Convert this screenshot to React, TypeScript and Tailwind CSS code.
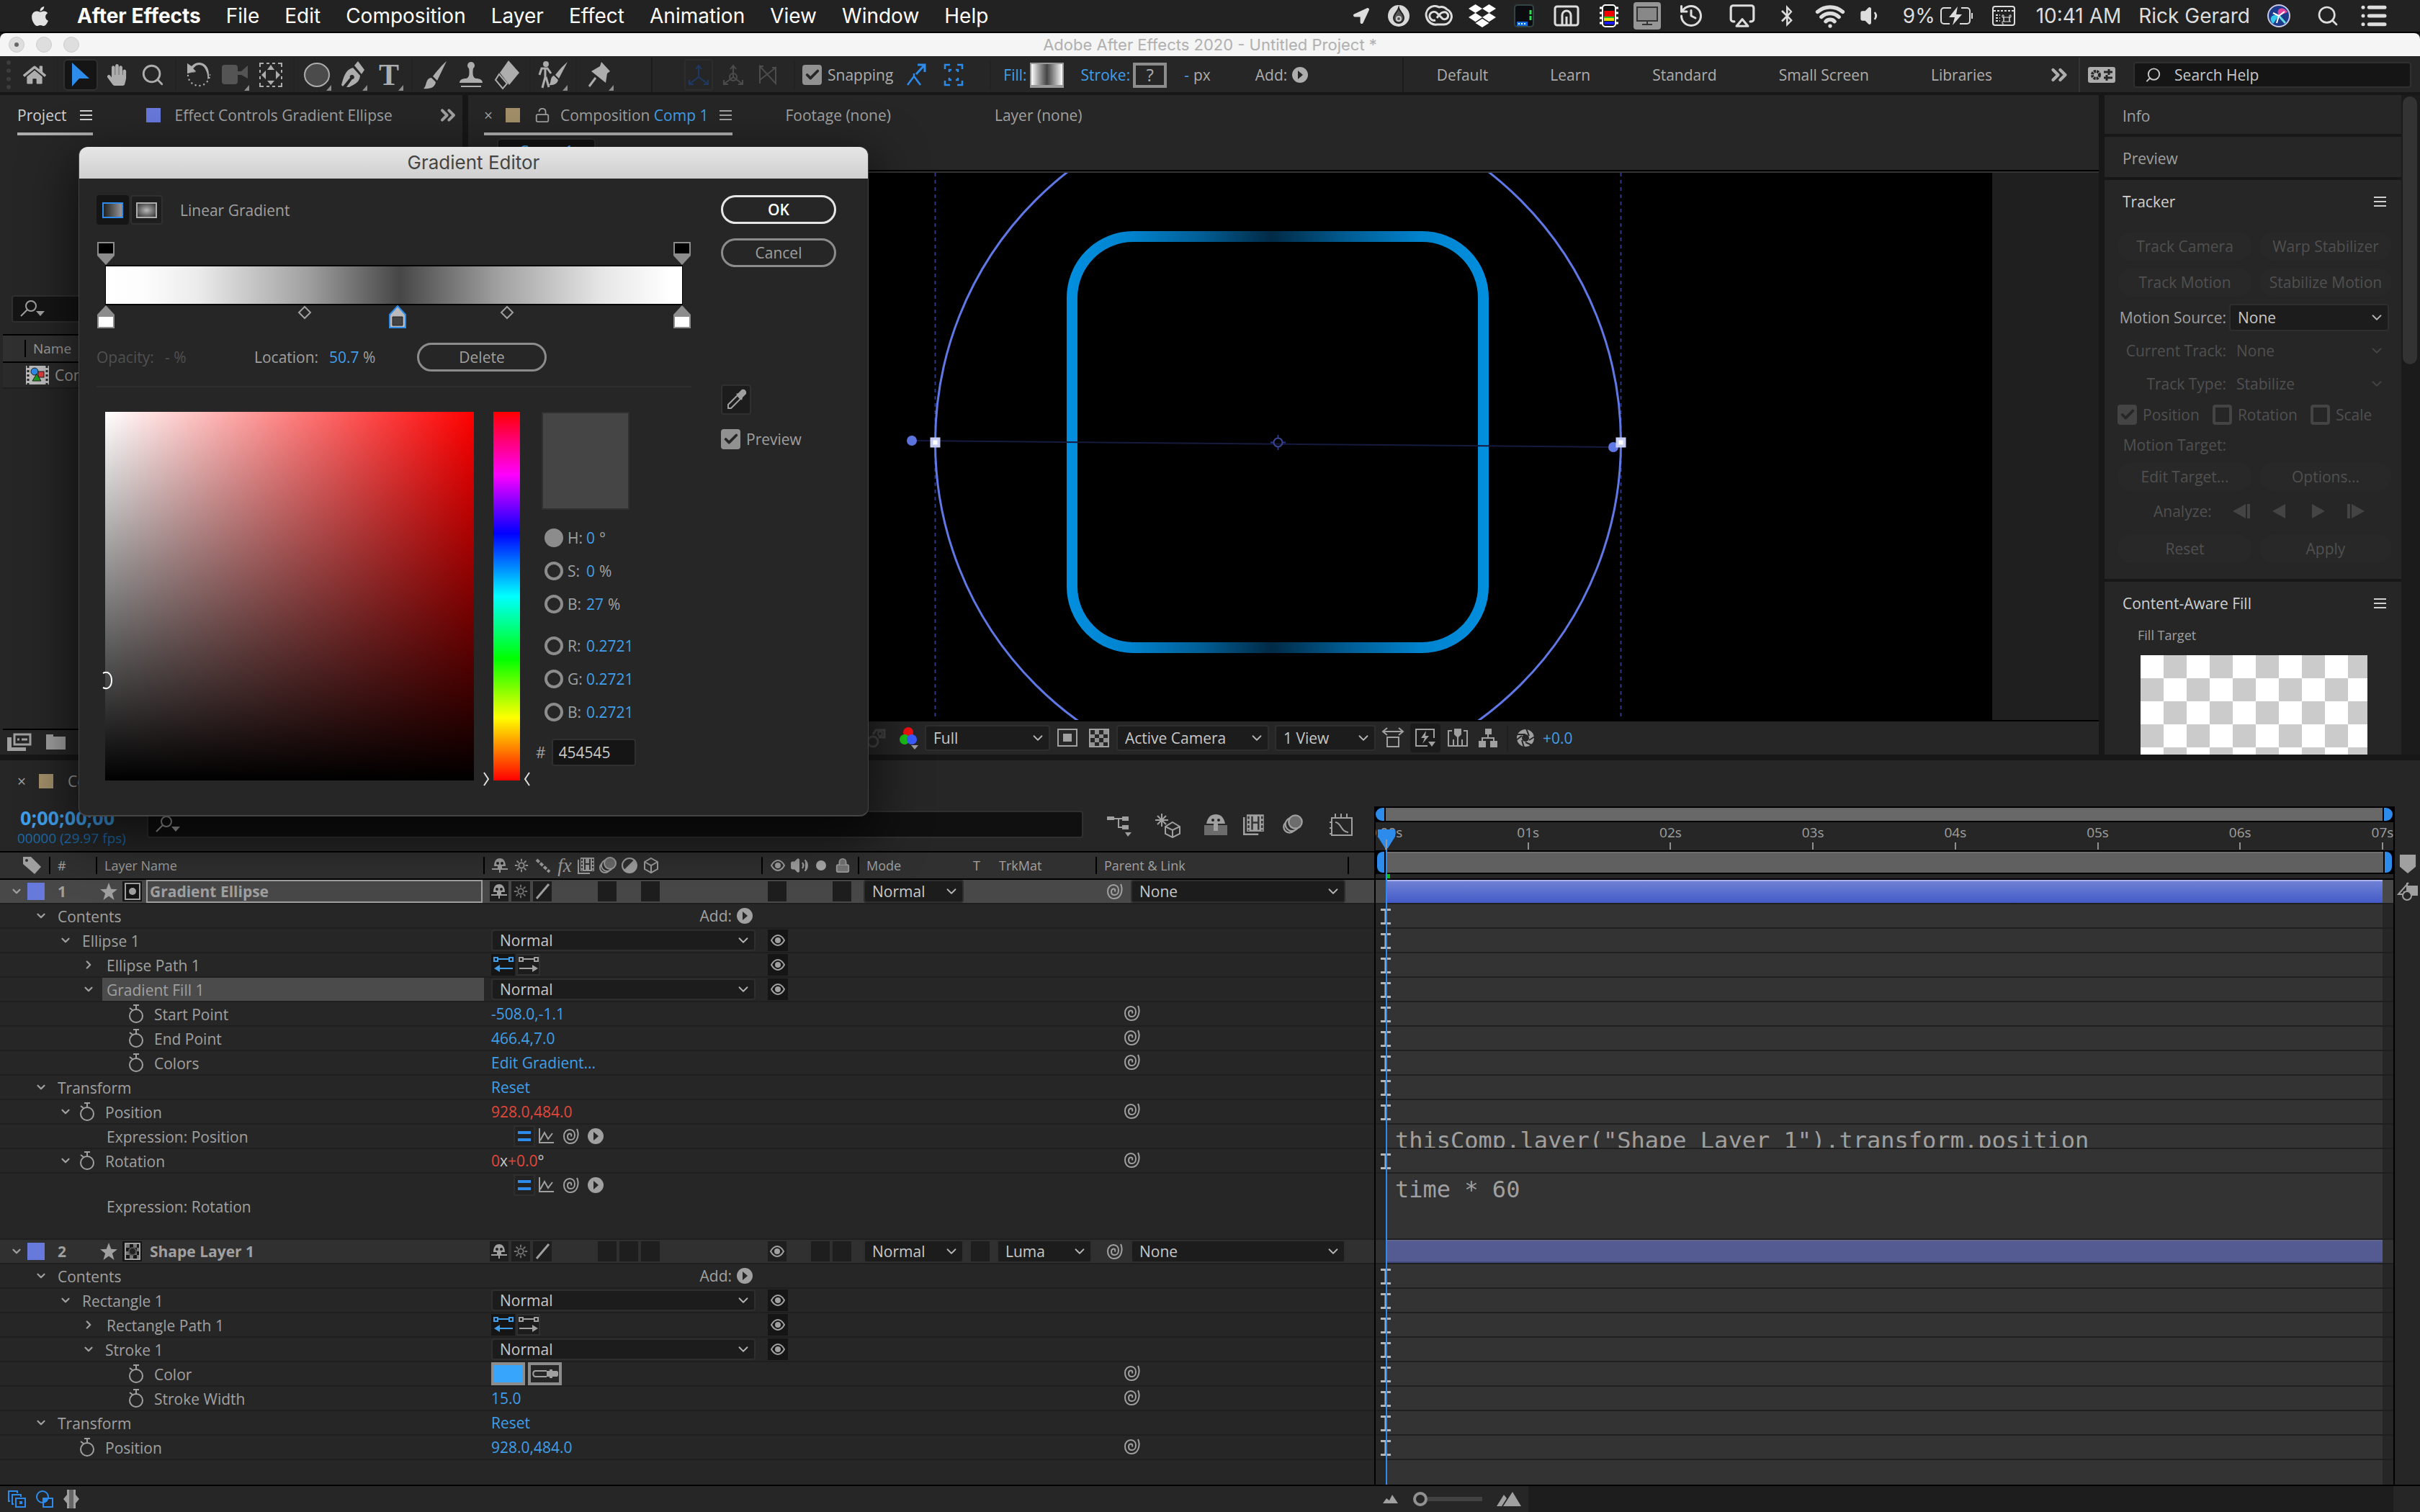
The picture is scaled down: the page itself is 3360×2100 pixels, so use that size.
import type { ReactNode } from 'react';
import clsx from 'clsx';
import { Airplay, Check, ChevronDown, ChevronRight, ChevronsRight, History, List, Lock, LockOpen, Search, Volume1, Volume2, Wifi } from 'lucide-react';
import { FaApple, FaBluetoothB, FaDropbox, FaHandPaper, FaHome, FaLocationArrow } from 'react-icons/fa';

/* ---------- icons ---------- */

type IconProps = { w?: number; h?: number; box?: string; className?: string; children: ReactNode };

function Icon({ w = 24, h = 24, box = '0 0 24 24', className, children }: IconProps) {
  return (
    <svg width={w} height={h} viewBox={box} className={clsx('shrink-0', className)} fill="none" stroke="currentColor" strokeWidth="2" aria-hidden="true">
      {children}
    </svg>
  );
}

const Pickwhip = () => (
  <Icon>
    <path d="M20 2C23 8 22 22 11 22 4 22 2 16 2 12 2 6 6 3 10 3c5 0 7 4 7 7.500 0 4-2.500 6.500-5.500 6.500S7 15 7 12.500 8.500 8.500 10.500 8.500s2 2 1.500 4" />
  </Icon>
);

const Eye = () => (
  <Icon w={22} h={18} box="0 0 22 18">
    <path d="M2 9C5 3.500 8 2 11 2s6 1.500 9 7c-3 5.500-6 7-9 7S5 14.500 2 9Z" />
    <circle cx="11" cy="9" r="4" fill="currentColor" stroke="none" />
  </Icon>
);

const Stopwatch = () => (
  <Icon w={22} h={28} box="0 0 22 28">
    <circle cx="11" cy="17" r="9" />
    <path d="M7 2h8M11 2v6M2 6l4 3" />
  </Icon>
);

const Shy = () => (
  <Icon w={24} h={22} box="0 0 24 22">
    <path d="M4 12C4 4 8 1 12 1s8 3 8 11h-5v3H9v-3Z" fill="currentColor" stroke="none" />
    <circle cx="9" cy="8" r="2" fill="#1f1f1f" stroke="none" />
    <circle cx="15" cy="8" r="2" fill="#1f1f1f" stroke="none" />
    <path d="M1 16h22M12 12v9" />
  </Icon>
);

const Sun = ({ className }: { className?: string }) => (
  <Icon w={22} h={22} className={className}>
    <circle cx="12" cy="12" r="4" />
    <path d="M12 2v4M12 18v4M2 12h4M18 12h4M5 5l3 3M16 16l3 3M19 5l-3 3M8 16l-3 3" />
  </Icon>
);

const Film = ({ size = 24 }: { size?: number }) => (
  <Icon w={size} h={size}>
    <path d="M1 4v19h16" />
    <path d="M4 1h19v19H4Z" fill="currentColor" stroke="none" />
    <path d="M10 3v15M17 3v15M10 10h7" stroke="#333" />
    <path d="M6 3v16M21 3v16" stroke="#333" strokeDasharray="3 2" />
  </Icon>
);

const MotionBlur = () => (
  <Icon w={26} h={24} box="0 0 26 24">
    <circle cx="9" cy="15" r="7" />
    <circle cx="12" cy="12" r="8" fill="#2c2c2c" />
    <circle cx="16" cy="9" r="8" fill="#6c6c6c" />
  </Icon>
);

const Cube = () => (
  <Icon>
    <path d="M12 2l9 5v10l-9 5-9-5V7ZM3 7l9 5 9-5M12 12v10" />
  </Icon>
);

const PlayCircle = () => (
  <Icon>
    <circle cx="12" cy="12" r="11" fill="currentColor" stroke="none" />
    <path d="M9 6v12l7-6Z" fill="#262626" stroke="none" />
  </Icon>
);

const Hamburger = () => (
  <Icon w={18} h={18} box="0 0 18 18">
    <path d="M0 3h17M0 9h17M0 15h17" />
  </Icon>
);

const SearchDrop = () => (
  <Icon w={36} h={24} box="0 0 36 24">
    <circle cx="15" cy="8" r="7" />
    <path d="M10 13L1 22" />
    <path d="M22 15h12l-6 7Z" fill="currentColor" stroke="none" />
  </Icon>
);

const Eyedropper = () => (
  <Icon w={30} h={30} box="0 0 30 30">
    <path d="M17 9L4 22v5h4L21 14Z" />
    <path d="M15 7l3-1 5-5c4-1 7 2 6 6l-5 5-1 4Z" fill="currentColor" stroke="none" />
  </Icon>
);

const Star = () => (
  <Icon w={26} h={26}>
    <path d="M12 1l3 8 8 .5-6.500 5L19 23l-7-5-7 5 2.500-8.500L1 9.500 9 9Z" fill="currentColor" stroke="none" />
  </Icon>
);

const Graph = () => (
  <Icon>
    <path d="M2 1v20h20M3 18l6-11 5 9 6-8" />
  </Icon>
);

const IBeam = () => (
  <Icon w={14} h={22} box="0 0 14 22" className="text-[#b5b5b5]">
    <path d="M0 1.500h14M0 20.500h14M7 1v20" strokeWidth="3" />
  </Icon>
);

/* ---------- shared controls ---------- */

type DropdownProps = { label: string; value: string; className: string; dim?: boolean };

function Dropdown({ label, value, className, dim }: DropdownProps) {
  return (
    <div className={clsx('relative shrink-0', className)}>
      <select
        aria-label={label}
        disabled={dim}
        className={clsx(
          'h-full w-full appearance-none pl-2.5 text-[21px] leading-none',
          dim ? 'rounded text-[#505050]' : 'rounded-sm border-2 border-[#2e2e2e] bg-[#1c1c1c] text-[#c8c8c8]'
        )}
      >
        <option>{value}</option>
      </select>
      <ChevronDown size={22} className={clsx('pointer-events-none absolute top-1/2 right-1.5 -translate-y-1/2', dim ? 'text-[#454545]' : 'text-[#b5b5b5]')} />
    </div>
  );
}

function CheckBox({ label, checked, dim, className }: { label: string; checked?: boolean; dim?: boolean; className?: string }) {
  return (
    <label className={clsx('flex items-center gap-2', dim && 'text-[#505050]', className)}>
      <span className="grid">
        <input
          type="checkbox"
          defaultChecked={checked}
          disabled={dim}
          className={clsx(
            'col-start-1 row-start-1 h-7 w-[27px] appearance-none rounded border-4',
            dim ? 'border-[#444]' : 'border-[#919191]',
            checked && (dim ? 'bg-[#444]' : 'bg-[#919191]')
          )}
        />
        {checked && <Check size={22} strokeWidth={4} className="pointer-events-none col-start-1 row-start-1 m-auto text-[#262626]" />}
      </span>
      {label}
    </label>
  );
}

/* ---------- mac menu bar ---------- */

const menus = ['File', 'Edit', 'Composition', 'Layer', 'Effect', 'Animation', 'View', 'Window', 'Help'];

function MenuBar() {
  return (
    <header className="flex h-[46px] items-center border-b-2 border-black bg-[#222] pr-[44px] pl-10 font-[Inter,sans-serif] text-[28px] text-white">
      <FaApple size={31} className="text-[#e2e2e2]" />
      <nav className="ml-9 flex gap-[35px]">
        <button className="font-bold">After Effects</button>
        {menus.map((m) => (
          <button key={m}>{m}</button>
        ))}
      </nav>
      <div className="ml-auto flex items-center text-[#ddd]">
        <span className="flex w-[52px] justify-center"><FaLocationArrow size={22} /></span>
        <span className="flex w-[52px] justify-center">
          <Icon w={32} h={32} box="0 0 32 32">
            <circle cx="16" cy="16" r="15" fill="#d8d8d8" stroke="none" />
            <path d="M16 5c1 5 7 8 7 14a7 7 0 0 1-14 0c0-5 5-8 7-14Z" fill="#555" stroke="#222" />
            <circle cx="16" cy="20" r="3" stroke="#ccc" />
          </Icon>
        </span>
        <span className="flex w-[60px] justify-center">
          <Icon w={40} h={30} box="0 0 40 30">
            <path d="M20 3a12 12 0 0 0-17 15c2 6 8 10 14 9h10a11 11 0 0 0 4-21c-3-3-7-4-11-3Z" strokeWidth="3" />
            <path d="M15 21a6 6 0 1 1 2-10l8 8a5 5 0 1 0 1-9c-4 0-6 4-9 8" strokeWidth="3" />
          </Icon>
        </span>
        <span className="flex w-[60px] justify-center"><FaDropbox size={38} className="text-white" /></span>
        <span className="flex w-[56px] justify-center">
          <Icon w={32} h={34} box="0 0 32 34">
            <rect x="3" y="2" width="26" height="30" rx="4" fill="#0c0c10" stroke="#344" />
            <path d="M25 9v16" stroke="#2fe04a" strokeWidth="3" strokeDasharray="6 2" />
            <path d="M6 25h15v6H6Z" fill="#1769e0" stroke="none" />
            <path d="M8 28h11" stroke="#cfe" strokeDasharray="2 2" />
          </Icon>
        </span>
        <span className="flex w-[62px] justify-center">
          <Icon w={36} h={30} box="0 0 36 30">
            <rect x="2" y="2" width="32" height="26" rx="3" strokeWidth="3" />
            <path d="M12 27V14a6 6 0 0 1 12 0v13M18 27V16" strokeWidth="3" />
          </Icon>
        </span>
        <span className="flex w-[56px] justify-center">
          <Icon w={28} h={34} box="0 0 28 34">
            <path d="M1 6h4M1 13h4M1 20h4M1 27h4M23 6h4M23 13h4M23 20h4M23 27h4" stroke="#fff" strokeWidth="3" />
            <rect x="5" y="2" width="18" height="30" rx="4" fill="#111" stroke="#fff" />
            <path d="M7 10h14v8H7Z" fill="#f00000" stroke="none" />
            <path d="M7 18h14v2H7Z" fill="#18c818" stroke="none" />
            <path d="M7 20h14v4H7Z" fill="#f0e000" stroke="none" />
            <path d="M7 25h14v4H7Z" fill="#1818f0" stroke="none" />
          </Icon>
        </span>
        <span className="mx-1.5 flex h-[38px] w-[38px] items-center justify-center rounded bg-[#969696]">
          <Icon w={32} h={28} box="0 0 32 28">
            <rect x="2" y="2" width="28" height="19" fill="#888" stroke="#333" />
            <path d="M16 21v4M9 26h14" stroke="#333" />
          </Icon>
        </span>
        <span className="flex w-[72px] justify-center"><History size={36} /></span>
        <span className="flex w-[70px] justify-center"><Airplay size={38} /></span>
        <span className="flex w-[54px] justify-center"><FaBluetoothB size={30} /></span>
        <span className="flex w-[66px] justify-center"><Wifi size={42} strokeWidth={3} /></span>
        <span className="mr-5 flex w-[48px] justify-center"><Volume1 size={32} fill="currentColor" /></span>
        <span>9%</span>
        <Icon w={48} h={28} box="0 0 48 28" className="ml-1.5">
          <path d="M16 3H6a4 4 0 0 0-4 4v14a4 4 0 0 0 4 4h8M30 3h8a4 4 0 0 1 4 4v14a4 4 0 0 1-4 4H28M45 10v8" />
          <path d="M25 1L13 16h8l-3 11 13-15h-8Z" fill="currentColor" stroke="none" />
        </Icon>
        <Icon w={34} h={30} box="0 0 34 30" className="ml-6">
          <rect x="2" y="2" width="30" height="26" rx="3" />
          <path d="M3 8h28M6 14h6M6 18h6M6 22h6" strokeDasharray="3 2" />
          <path d="M17 17h8v6h-8ZM17 17h-2v-3h2v9h-2v3h2M25 17h2v-3h-2v9h2" strokeWidth="1" />
        </Icon>
        <span className="ml-7">10:41 AM</span>
        <span className="ml-6">Rick Gerard</span>
        <Icon w={32} h={32} box="0 0 32 32" className="ml-6">
          <circle cx="16" cy="16" r="15" fill="#1c3a8c" stroke="#c8c8e0" />
          <path d="M16 16C10 4 24 2 28 11Z" fill="#e0449c" stroke="none" />
          <path d="M16 16C4 12 2 22 8 27Z" fill="#34c8e8" stroke="none" />
          <path d="M16 16l9 10" stroke="#64e0e0" strokeWidth="3" />
          <path d="M8 12l8 4 8-6M16 16l-3 10" stroke="#fff" />
        </Icon>
        <Search size={32} className="ml-9" />
        <List size={40} strokeWidth={3} className="ml-7" />
      </div>
    </header>
  );
}

/* ---------- tool bar ---------- */

const Sep = () => <span className="mx-[5px] h-11 w-0.5 bg-[#222]" />;

type ToolProps = { label: string; active?: boolean; flyout?: boolean; children: ReactNode };

function Tool({ label, active, flyout, children }: ToolProps) {
  return (
    <button aria-label={label} className={clsx('relative flex h-11 w-12 items-center justify-center rounded-md', active && 'border-2 border-[#303030] bg-[#151515] text-[#2d8ceb]')}>
      {children}
      {flyout && (
        <svg width="7" height="8" viewBox="0 0 7 8" className="absolute right-1 bottom-0" aria-hidden="true">
          <path d="M7 0v8H0Z" fill="#8c8c8c" />
        </svg>
      )}
    </button>
  );
}

function ToolBar() {
  return (
    <div className="flex h-[50px] items-center bg-[#262626] pt-0.5 pr-3 text-[#adadad]">
      <span className="ml-[9px] mr-[9px] h-10 border-l-[6px] border-dotted border-[#3c3c3c]" />
      <div className="flex items-center gap-0.5">
        <Tool label="Home"><FaHome size={32} /></Tool>
        <Sep />
        <Tool label="Selection" active>
          <Icon w={28} h={36} box="0 0 28 36"><path d="M2 1v33l10-11h14Z" fill="currentColor" stroke="none" /></Icon>
        </Tool>
        <Tool label="Hand"><FaHandPaper size={30} /></Tool>
        <Tool label="Zoom"><Search size={34} /></Tool>
        <Sep />
        <Tool label="Rotate">
          <Icon w={34} h={40} box="0 0 34 40">
            <path d="M7 9C14-1 32 1 31 21c0 2-1 4-2 6 2-12-3-21-12-21-3 0-6 2-8 6l4 4-12 2V4Z" fill="currentColor" stroke="none" />
            <circle cx="17" cy="20" r="15" strokeWidth="2.500" strokeLinecap="round" strokeDasharray="0 6" pathLength="94" strokeDashoffset="-10" />
            <path d="M3 18L2 1h30v20l-5-1c2-8-4-14-10-14-4 0-6 2-8 5l4 4Z" fill="#262626" stroke="none" />
            <path d="M7 8C14-1 32 1 31 21c0 2 0 4-1 5-1-9-4-20-13-20-3 0-6 2-8 5l4 4-12 3V4Z" fill="currentColor" stroke="none" />
          </Icon>
        </Tool>
        <Tool label="Camera" flyout>
          <Icon w={38} h={30} box="0 0 38 30" className="text-[#545454]">
            <rect x="1" y="1" width="22" height="27" rx="4" fill="currentColor" stroke="none" />
            <path d="M23 10h5l9-8v18l-9-5h-5Z" fill="currentColor" stroke="none" />
          </Icon>
        </Tool>
        <Tool label="Pan behind">
          <Icon w={34} h={36} box="0 0 34 36">
            <path d="M2 7V2h5M27 2h5v5M32 29v5h-5M7 34H2v-5M11 2h4M19 2h4M11 34h4M19 34h4M2 11v4M2 20v4M32 11v4M32 20v4" />
            <path d="M17 4l5 7H12ZM17 32l5-6H12ZM4 18l6-6v12ZM30 18l-6-6v12Z" fill="currentColor" stroke="none" />
          </Icon>
        </Tool>
        <Sep />
        <Tool label="Ellipse" flyout>
          <Icon w={38} h={36} box="0 0 38 36"><ellipse cx="19" cy="18" rx="17" ry="16" fill="#4b4b4b" /></Icon>
        </Tool>
        <Tool label="Pen" flyout>
          <Icon w={34} h={40} box="0 0 34 40">
            <path d="M17 10l10 11c-1 10-8 12-15 16H8l8-11a3 3 0 1 0-3-2L3 36l-2-2C4 24 6 13 17 10Z" fill="currentColor" stroke="none" />
            <path d="M19 7l5-6 9 12-4 6Z" fill="currentColor" stroke="none" />
          </Icon>
        </Tool>
        <Tool label="Type" flyout><span className="font-['Liberation_Serif',serif] text-[42px] leading-none font-bold">T</span></Tool>
        <Sep />
        <Tool label="Brush">
          <Icon w={34} h={40} box="0 0 34 40">
            <path d="M33 1L20 28l-6-6C20 14 27 6 33 1Z" fill="currentColor" stroke="none" />
            <path d="M12 24l6 6c-1 7-7 10-17 9 5-3 2-14 11-15Z" fill="currentColor" stroke="none" />
          </Icon>
        </Tool>
        <Tool label="Clone stamp">
          <Icon w={34} h={38} box="0 0 34 38">
            <circle cx="17" cy="6" r="5" fill="currentColor" stroke="none" />
            <path d="M14 9h6c-1 8-1 14 4 15 5 0 9 2 9 6H1c0-4 4-6 9-6 5-1 5-7 4-15Z" fill="currentColor" stroke="none" />
            <path d="M3 35h28" />
          </Icon>
        </Tool>
        <Tool label="Eraser">
          <Icon w={36} h={42} box="0 0 36 42">
            <path d="M20 1l15 17-14 17L8 18Z" fill="currentColor" stroke="none" />
            <path d="M7 20l11 13-6 7L2 28Z" />
          </Icon>
        </Tool>
        <Sep />
        <Tool label="Roto brush" flyout>
          <Icon w={42} h={38} box="0 0 42 38">
            <circle cx="11" cy="4" r="4" fill="currentColor" stroke="none" />
            <path d="M2 19l3-9h8l5 7M10 10v12l-4 15M11 22l4 14" strokeWidth="3" />
            <path d="M41 1L29 24l-5-5C30 11 36 5 41 1ZM22 20l6 6c-1 5-6 8-13 7 4-3 1-11 7-13Z" fill="currentColor" stroke="none" />
          </Icon>
        </Tool>
        <Sep />
        <Tool label="Puppet pin" flyout>
          <Icon w={32} h={38} box="0 0 32 38">
            <path d="M19 1l12 13-4 3-2 13L5 14l12-7Z" fill="currentColor" stroke="none" />
            <path d="M11 23L2 35" strokeWidth="3" />
          </Icon>
        </Tool>
      </div>
      <span className="ml-12 h-full w-0.5 bg-[#1c1c1c]" />
      <div className="ml-11 flex items-center gap-3">
        <span className="flex h-11 w-10 items-center justify-center rounded border-2 border-[#2d2d2d] text-[#1e3a63]">
          <Icon w={30} h={30} box="0 0 30 30"><path d="M15 3v15L3 27M15 18l12 9M11 7l4-5 4 5M2 22v6h6M28 22v6h-6" /></Icon>
        </span>
        <Icon w={32} h={30} box="0 0 30 30" className="text-[#4c4c4c]"><circle cx="15" cy="18" r="5" /><path d="M15 3v15L3 27M15 18l12 9M11 7l4-5 4 5M2 22v6h6M28 22v6h-6" /></Icon>
        <Icon w={32} h={30} box="0 0 30 30" className="ml-1 text-[#4c4c4c]"><path d="M4 27V3l22 24V5L4 22M4 8V3h5M26 10V5h-5" /></Icon>
      </div>
      <span className="ml-5 h-11 w-0.5 bg-[#222]" />
      <CheckBox label="Snapping" checked className="ml-2.5" />
      <Icon w={28} h={32} box="0 0 28 32" className="ml-[18px] text-[#2d8ceb]">
        <path d="M2 30l9-12 9 12M11 18v-4" strokeWidth="2.500" />
        <path d="M16 2h10v10M26 2L14 15" strokeWidth="3" strokeDasharray="30 0" />
      </Icon>
      <Icon w={28} h={32} box="0 0 28 32" className="ml-6 text-[#2d8ceb]">
        <path d="M2 8V2h7M19 2h7v6M26 24v6h-7M9 30H2v-6M8 12V9h3M17 9h3v3M20 20v3h-3M11 23H8v-3" strokeWidth="2.500" />
      </Icon>
      <span className="mr-[17px] ml-9 h-11 w-0.5 bg-[#222]" />
      <button className="text-[#409fea]">Fill:</button>
      <span className="ml-1 h-[35px] w-[47px] border-2 border-b-4 border-[#999] bg-linear-to-r from-white via-[#454545] to-white" />
      <button className="ml-6 text-[#409fea]">Stroke:</button>
      <span className="ml-1 flex h-[35px] w-[47px] items-center justify-center border-4 border-[#8c8c8c] text-[24px]">?</span>
      <span className="ml-6 text-[#409fea]">-</span>
      <span className="ml-1.5">px</span>
      <span className="ml-[62px] mr-1.5">Add:</span>
      <PlayCircle />
      <div className="ml-auto flex h-full items-center">
        <span className="h-full w-0.5 bg-[#1c1c1c]" />
        <nav className="ml-[46px] flex gap-[86px]">
          {['Default', 'Learn', 'Standard', 'Small Screen', 'Libraries'].map((w) => (
            <button key={w}>{w}</button>
          ))}
        </nav>
        <ChevronsRight size={34} strokeWidth={3} className="ml-[76px]" />
        <span className="ml-[10px] h-full w-0.5 bg-[#333]" />
        <Icon w={40} h={26} box="0 0 40 26" className="ml-2.5">
          <rect x="1" y="2" width="38" height="22" rx="3" fill="currentColor" stroke="none" />
          <circle cx="12" cy="13" r="5" stroke="#262626" strokeWidth="4" strokeDasharray="3 1" />
          <path d="M23 9h12M23 17h12M30 5v8M27 13v8" stroke="#262626" strokeWidth="3" />
        </Icon>
        <label className="ml-6 flex h-9 w-[386px] items-center gap-[18px] rounded border-2 border-[#303030] bg-[#151515] pl-3.5 text-[#c8c8c8]">
          <Search size={26} className="-scale-x-100" />
          <input aria-label="Search Help" defaultValue="Search Help" className="w-full bg-transparent outline-none" />
        </label>
      </div>
    </div>
  );
}

/* ---------- upper panels ---------- */

function ProjectPanel() {
  return (
    <section className="flex w-[642px] shrink-0 flex-col bg-[#262626] pl-1">
      <div className="flex h-[56px] shrink-0 items-center">
        <span className="ml-5 flex h-[52px] items-center gap-[18px] self-end border-b-4 border-[#adadad] text-[#d0d0d0]">
          Project <Hamburger />
        </span>
        <span className="ml-[74px] h-5 w-5 bg-[#6879dc]" />
        <span className="ml-5">Effect Controls Gradient Ellipse</span>
        <ChevronsRight size={32} strokeWidth={3} className="mr-1 ml-auto" />
      </div>
      <div className="mt-[222px] ml-3 flex h-[38px] items-center rounded border-2 border-[#303030] bg-[#151515] pl-2.5">
        <SearchDrop />
      </div>
      <div className="mt-4 flex h-10 items-center border-y-2 border-black bg-[#303030] text-[19px]">
        <span className="mr-2.5 ml-[30px] h-6 w-0.5 bg-black" />Name
      </div>
      <div className="flex h-9 items-center gap-2 border-b-2 border-[#1f1f1f] bg-[#2a2a2a] pl-8">
        <Icon w={32} h={26} box="0 0 32 26">
          <rect width="32" height="26" fill="#bdbdbd" stroke="none" />
          <path d="M3 0v26M29 0v26" stroke="#262626" strokeDasharray="3 3" strokeWidth="3" />
          <circle cx="12" cy="8" r="5" fill="#2d8ceb" stroke="#222" strokeWidth="1" />
          <rect x="17" y="8" width="8" height="8" fill="#e03c3c" stroke="#222" strokeWidth="1" />
          <path d="M15 11l6 10H9Z" fill="#1f9c1f" stroke="#222" strokeWidth="1" />
        </Icon>
        Comp 1
      </div>
      <div className="mt-auto flex h-9 items-center gap-5 border-t-2 border-black pl-1.5">
        <Icon w={34} h={26} box="0 0 34 26">
          <rect x="10" y="2" width="22" height="14" strokeWidth="3" />
          <path d="M14 9h3M20 9h8" strokeWidth="3" />
          <path d="M0 6h6v14h20v5H0Z" fill="currentColor" stroke="none" />
        </Icon>
        <Icon w={28} h={22} box="0 0 28 22"><path d="M0 0h10v3h17v18H0Z" fill="currentColor" stroke="none" /></Icon>
      </div>
    </section>
  );
}

function Viewer() {
  return (
    <svg viewBox="650 240 2116 760" className="h-[760px] min-w-0 flex-1 bg-black" role="img" aria-label="Comp 1">
      <defs>
        <linearGradient id="stroke" gradientUnits="userSpaceOnUse" x1="1481" y1="0" x2="2067" y2="0">
          <stop offset="0" stopColor="#018fdf" />
          <stop offset=".15" stopColor="#0083ce" />
          <stop offset=".32" stopColor="#005d94" />
          <stop offset=".485" stopColor="#002a45" />
          <stop offset=".66" stopColor="#005b91" />
          <stop offset=".84" stopColor="#0083ce" />
          <stop offset="1" stopColor="#018fdf" />
        </linearGradient>
      </defs>
      <path d="M1298.500 240v760M2250.500 240v760" stroke="#2c3982" strokeDasharray="5 5" strokeWidth="2" />
      <rect x="1488.500" y="328.500" width="571" height="571" rx="85" fill="none" stroke="url(#stroke)" strokeWidth="15" />
      <path d="M1266 612L2240 621" stroke="#151a3f" strokeWidth="2" />
      <circle cx="1774.500" cy="614.500" r="476" fill="none" stroke="#6078e6" strokeWidth="3" />
      <circle cx="1774.500" cy="614.500" r="6" fill="none" stroke="#3a4796" strokeWidth="2" />
      <path d="M1774.500 604v4M1774.500 621v4M1764 614.500h4M1781 614.500h4" stroke="#2c3982" strokeWidth="2" />
      <circle cx="1266" cy="612" r="7" fill="#6078e6" />
      <circle cx="2240" cy="621" r="7" fill="#6078e6" />
      <rect x="1293.500" y="609.500" width="10" height="10" fill="#fff" stroke="#c9cff5" strokeWidth="4" />
      <rect x="2245.500" y="609.500" width="10" height="10" fill="#fff" stroke="#c9cff5" strokeWidth="4" />
    </svg>
  );
}

function CompositionPanel() {
  return (
    <section className="flex min-w-0 flex-1 flex-col bg-[#262626]">
      <div className="flex h-[56px] items-center">
        <div className="ml-[22px] flex h-[52px] items-center self-end border-b-4 border-[#adadad]">
          <span className="w-[30px]">×</span>
          <span className="h-5 w-5 bg-[#a3906a]" />
          <LockOpen size={22} className="mr-3.5 ml-5 -scale-x-100" />
          Composition&nbsp;<span className="text-[#409fea]">Comp 1</span>
          <span className="ml-4"><Hamburger /></span>
        </div>
        <span className="ml-[73px]">Footage (none)</span>
        <span className="ml-[144px]">Layer (none)</span>
      </div>
      <div className="flex h-[50px] border-b-2 border-black pl-10">
        <button className="mt-1 h-9 w-[137px] rounded-md border-2 border-[#2e2e2e] bg-[#131313] text-[#409fea]">Comp 1</button>
      </div>
      <div className="flex border-t-2 border-[#333]">
        <Viewer />
        <div className="w-[148px] bg-[#1f1f1f]" />
      </div>
      <div className="flex h-[48px] items-center border-t-2 border-black pl-[548px]">
        <Icon w={32} h={30} box="0 0 32 30" className="text-[#444]">
          <circle cx="14" cy="20" r="7" strokeWidth="3" />
          <path d="M14 10l4-6h12v10h-8" strokeWidth="3" />
          <circle cx="24" cy="9" r="3" />
        </Icon>
        <Icon w={30} h={34} box="0 0 30 34" className="ml-[18px]">
          <circle cx="13" cy="9" r="7" fill="#f01010" stroke="none" />
          <circle cx="8" cy="19" r="7" fill="#18c018" stroke="none" />
          <circle cx="18" cy="19" r="7" fill="#3a5cff" stroke="none" />
          <path d="M17 27h10l-5 6Z" fill="currentColor" stroke="none" />
        </Icon>
        <Dropdown label="Resolution" value="Full" className="ml-1.5 h-9 w-[174px]" />
        <Icon w={28} h={26} box="0 0 28 26" className="ml-2.5"><rect x="1" y="1" width="26" height="23" /><rect x="8" y="7" width="12" height="11" fill="currentColor" stroke="none" /></Icon>
        <Icon w={28} h={26} box="0 0 28 26" className="mr-2.5 ml-4">
          <rect x="1" y="1" width="26" height="24" fill="#262626" />
          <path d="M8 2h6v6H8ZM20 2h6v6h-6ZM2 8h6v5H2ZM14 8h6v5h-6ZM8 13h6v6H8ZM20 13h6v6h-6ZM2 19h6v5H2ZM14 19h6v5h-6Z" fill="#909090" stroke="none" />
        </Icon>
        <Dropdown label="3D view" value="Active Camera" className="h-9 w-[212px]" />
        <Dropdown label="View layout" value="1 View" className="ml-2 h-9 w-[140px]" />
        <Icon w={32} h={30} box="0 0 32 30" className="ml-2"><path d="M2 6h28M8 1L2 6l6 5M24 1l6 5-6 5" /><rect x="8" y="14" width="16" height="13" /></Icon>
        <span className="ml-2 flex h-10 w-[42px] items-center justify-center rounded bg-[#1b1b1b]">
          <Icon w={30} h={28} box="0 0 30 28"><path d="M27 14V2H2v23h16" /><path d="M16 4L9 14h5l-3 8 9-11h-5ZM19 19h10l-5 7Z" fill="currentColor" stroke="none" /></Icon>
        </span>
        <Icon w={28} h={26} box="0 0 28 26" className="ml-2.5"><path d="M6 3H1v21h26V3h-5M8 24v-9M20 24v-9M14 24V12" /><path d="M9 0h10v8l-5 5-5-5Z" fill="currentColor" stroke="none" /></Icon>
        <Icon w={28} h={28} box="0 0 28 28" className="ml-3.5"><path d="M10 1h9v8h-9ZM1 18h10v9H1ZM17 18h10v9H17Z" fill="currentColor" stroke="none" /><path d="M14 9v5M6 18v-4h16v4" /></Icon>
        <span className="mr-2.5 ml-3 h-9 w-0.5 bg-[#202020]" />
        <Icon w={28} h={28} box="0 0 28 28">
          <circle cx="14" cy="14" r="12" fill="currentColor" stroke="none" />
          <path d="M14 9L3 9M19 11L15 1M19 17l8-5M14 20l9 4M9 17l3 10M9 11l-8 6" stroke="#262626" />
          <circle cx="14" cy="14" r="5" fill="#262626" stroke="none" />
        </Icon>
        <button className="ml-2.5 text-[#409fea]">+0.0</button>
      </div>
    </section>
  );
}

const GhostButton = ({ children }: { children: ReactNode }) => (
  <button disabled className="h-10 rounded-full bg-[#282828] text-[#505050]">{children}</button>
);

function RightPanel() {
  return (
    <aside className="flex w-[438px] shrink-0">
      <div className="flex flex-1 flex-col overflow-hidden">
        <h2 className="flex h-[54px] shrink-0 items-center bg-[#262626] pt-1 pl-[25px]">Info</h2>
        <h2 className="mt-1 flex h-[56px] shrink-0 items-center bg-[#262626] pt-1 pl-[25px]">Preview</h2>
        <div className="mt-1 h-[554px] shrink-0 bg-[#262626] pr-4 pl-[18px]">
          <h2 className="flex h-[60px] items-center justify-between pr-1 pl-[7px] text-[#d0d0d0]">Tracker <Hamburger /></h2>
          <div className="mt-3 grid grid-cols-[187px_184px] gap-x-2.5 gap-y-2.5">
            <GhostButton>Track Camera</GhostButton>
            <GhostButton>Warp Stabilizer</GhostButton>
            <GhostButton>Track Motion</GhostButton>
            <GhostButton>Stabilize Motion</GhostButton>
          </div>
          <div className="mt-2.5 grid grid-cols-[151px_222px] items-center gap-x-1 gap-y-2 text-right">
            <span>Motion Source:</span>
            <Dropdown label="Motion source" value="None" className="h-[38px]" />
            <span className="text-[#505050]">Current Track:</span>
            <Dropdown label="Current track" value="None" dim className="h-[38px]" />
            <span className="text-[#505050]">Track Type:</span>
            <Dropdown label="Track type" value="Stabilize" dim className="h-[38px]" />
          </div>
          <div className="mt-2.5 flex gap-[18px]">
            <CheckBox label="Position" checked dim />
            <CheckBox label="Rotation" dim />
            <CheckBox label="Scale" dim />
          </div>
          <p className="mt-3.5 w-[151px] text-right text-[#505050]">Motion Target:</p>
          <div className="mt-2.5 grid grid-cols-[187px_184px] gap-2.5">
            <GhostButton>Edit Target...</GhostButton>
            <GhostButton>Options...</GhostButton>
          </div>
          <div className="mt-3 flex h-8 items-center gap-[29px] pl-[50px] text-[#505050]">
            Analyze:
            <Icon className="text-[#444]"><path d="M18 2v20L0 12ZM20 2h4v20h-4Z" fill="currentColor" stroke="none" /></Icon>
            <Icon className="text-[#444]"><path d="M20 2v20L2 12Z" fill="currentColor" stroke="none" /></Icon>
            <Icon className="text-[#444]"><path d="M4 2v20l18-10Z" fill="currentColor" stroke="none" /></Icon>
            <Icon className="text-[#444]"><path d="M6 2v20l18-10ZM0 2h4v20H0Z" fill="currentColor" stroke="none" /></Icon>
          </div>
          <div className="mt-4 grid grid-cols-[187px_184px] gap-2.5">
            <GhostButton>Reset</GhostButton>
            <GhostButton>Apply</GhostButton>
          </div>
        </div>
        <div className="mt-1 min-h-0 flex-1 bg-[#262626] pr-4 pl-[25px]">
          <h2 className="flex h-[60px] items-center justify-between pr-1 text-[#d0d0d0]">Content-Aware Fill <Hamburger /></h2>
          <p className="pl-[21px] text-[18px] leading-7">Fill Target</p>
          <div className="mt-3.5 ml-[25px] h-[160px] w-[315px] bg-[repeating-conic-gradient(#cbcbcb_0_25%,#fff_0_50%)] bg-size-[64px_64px]" />
        </div>
      </div>
      <div className="w-[26px] bg-[#1b1b1b] pt-0.5 pl-0.5">
        <div className="h-[372px] w-5 rounded-full bg-[#333]" />
      </div>
    </aside>
  );
}

/* ---------- timeline ---------- */

const blue = 'text-[#409fea]';
const red = 'text-[#e0483c]';

type PropRow = {
  label: string;
  pad: string;
  chevron?: 'down' | 'right';
  watch?: boolean;
  selected?: boolean;
  tall?: boolean;
  value?: ReactNode;
  eye?: boolean;
  whip?: boolean;
  expression?: string;
};

const PathDirection = () => (
  <div className="flex gap-0.5">
    <button aria-label="Reverse path" className={clsx('flex h-[30px] w-[33px] items-center justify-center bg-[#151515]', blue)}>
      <Icon w={28} h={22} box="0 0 28 22"><path d="M1 1h5v5H1ZM22 1h5v5h-5ZM6 3h16M8 16h19" /><path d="M9 11v10l-8-5Z" fill="currentColor" stroke="none" /></Icon>
    </button>
    <button aria-label="Forward path" className="flex h-[30px] w-[33px] items-center justify-center border-2 border-[#303030] bg-[#1c1c1c]">
      <Icon w={28} h={22} box="0 0 28 22"><path d="M1 1h5v5H1ZM22 1h5v5h-5ZM6 3h16M1 16h19" /><path d="M19 11v10l8-5Z" fill="currentColor" stroke="none" /></Icon>
    </button>
  </div>
);

const Add = () => (
  <div className="flex flex-1 items-center justify-end gap-1.5 pr-5">Add: <PlayCircle /></div>
);

const ExpressionTools = () => (
  <div className="flex items-center gap-1 pl-[31px]">
    <span className="flex h-[30px] w-[30px] items-center justify-center border-2 border-[#2e2e2e] bg-[#222] text-[#2d8ceb]">
      <Icon w={18} h={14} box="0 0 18 14"><path d="M0 2h18M0 12h18" strokeWidth="4" /></Icon>
    </span>
    <div className="flex items-center gap-2.5">
      <Graph />
      <Pickwhip />
      <PlayCircle />
    </div>
  </div>
);

const Blend = () => <Dropdown label="Blend mode" value="Normal" className="h-[30px] w-[367px]" />;

const rows1: PropRow[] = [
  { label: 'Contents', pad: 'pl-12', chevron: 'down', value: <Add /> },
  { label: 'Ellipse 1', pad: 'pl-[82px]', chevron: 'down', value: <Blend />, eye: true },
  { label: 'Ellipse Path 1', pad: 'pl-[114px]', chevron: 'right', value: <PathDirection />, eye: true },
  { label: 'Gradient Fill 1', pad: 'pl-[114px]', chevron: 'down', selected: true, value: <Blend />, eye: true },
  { label: 'Start Point', pad: 'pl-[178px]', watch: true, whip: true, value: <span className={blue}>-508.0,-1.1</span> },
  { label: 'End Point', pad: 'pl-[178px]', watch: true, whip: true, value: <span className={blue}>466.4,7.0</span> },
  { label: 'Colors', pad: 'pl-[178px]', watch: true, whip: true, value: <button className={blue}>Edit Gradient...</button> },
  { label: 'Transform', pad: 'pl-12', chevron: 'down', value: <button className={blue}>Reset</button> },
  { label: 'Position', pad: 'pl-[82px]', chevron: 'down', watch: true, whip: true, value: <span className={red}>928.0,484.0</span> },
  { label: 'Expression: Position', pad: 'pl-[148px]', value: <ExpressionTools />, expression: 'thisComp.layer("Shape Layer 1").transform.position' },
  { label: 'Rotation', pad: 'pl-[82px]', chevron: 'down', watch: true, whip: true, value: <span className={red}>0<span className="text-[#c8c8c8]">x</span>+0.0<span className="text-[#c8c8c8]">°</span></span> },
  { label: 'Expression: Rotation', pad: 'pl-[148px]', tall: true, value: <ExpressionTools />, expression: 'time * 60' },
];

const rows2: PropRow[] = [
  { label: 'Contents', pad: 'pl-12', chevron: 'down', value: <Add /> },
  { label: 'Rectangle 1', pad: 'pl-[82px]', chevron: 'down', value: <Blend />, eye: true },
  { label: 'Rectangle Path 1', pad: 'pl-[114px]', chevron: 'right', value: <PathDirection />, eye: true },
  { label: 'Stroke 1', pad: 'pl-[114px]', chevron: 'down', value: <Blend />, eye: true },
  {
    label: 'Color',
    pad: 'pl-[178px]',
    watch: true,
    whip: true,
    value: (
      <div className="flex gap-1">
        <button aria-label="Stroke color" className="h-8 w-[47px] border-4 border-[#8c8c8c] bg-[#36a5fb]" />
        <button aria-label="Pick color" className="flex h-8 w-[47px] items-center justify-center border-4 border-[#8c8c8c]">
          <Icon w={36} h={12} box="0 0 36 12"><path d="M20 2H5C0 2 0 10 5 10h15" /><path d="M20 2h4V0h4v2h6c3 0 3 8 0 8h-6v2h-4v-2h-4Z" fill="currentColor" stroke="none" /></Icon>
        </button>
      </div>
    ),
  },
  { label: 'Stroke Width', pad: 'pl-[178px]', watch: true, whip: true, value: <span className={blue}>15.0</span> },
  { label: 'Transform', pad: 'pl-12', chevron: 'down', value: <button className={blue}>Reset</button> },
  { label: 'Position', pad: 'pl-[110px]', watch: true, whip: true, value: <span className={blue}>928.0,484.0</span> },
];

function PropertyRow({ row }: { row: PropRow }) {
  return (
    <div className={clsx('flex border-b-2 border-[#1f1f1f]', row.tall ? 'h-[92px]' : 'h-[34px]')}>
      <div className={clsx('flex w-[680px] shrink-0 items-center', row.pad)}>
        {row.chevron === 'down' && <ChevronDown size={18} strokeWidth={3} />}
        {row.chevron === 'right' && <ChevronRight size={18} strokeWidth={3} />}
        {row.watch && <span className={row.chevron && 'ml-2.5'}><Stopwatch /></span>}
        <span className={clsx('flex h-full items-center pt-0.5', row.selected ? 'mr-2 ml-2.5 flex-1 bg-[#4b4b4b] pl-1.5' : row.chevron || row.watch ? 'ml-3.5' : '', row.chevron === 'right' && 'pl-0.5')}>
          {row.label}
        </span>
      </div>
      <div className="flex h-8 w-[386px] shrink-0 items-center pl-0.5">{row.value}</div>
      <div className="flex h-8 w-[494px] shrink-0 items-center">
        {row.eye && <button aria-label="Visible" className="flex h-[30px] w-7 items-center justify-center bg-[#151515]"><Eye /></button>}
      </div>
      {row.whip && <span className="mt-[3px]"><Pickwhip /></span>}
    </div>
  );
}

const Cell = ({ on, children }: { on?: boolean; children?: ReactNode }) => (
  <span className={clsx('flex h-7 w-[26px] items-center justify-center', on && 'bg-[#1e1e1e]')}>{children}</span>
);

function LayerRow({ index, name, selected }: { index: number; name: string; selected?: boolean }) {
  return (
    <div className={clsx('flex h-[34px] items-center border-b-2 border-[#1f1f1f] pl-3.5', selected ? 'bg-[#484848]' : 'bg-[#303030]')}>
      <ChevronDown size={18} strokeWidth={3} />
      <span className="ml-1.5 h-6 w-6 bg-[#6879dc]" />
      <span className="ml-[18px] w-[58px] font-bold">{index}</span>
      <Star />
      <span className="ml-1.5 flex h-7 w-[27px] items-center justify-center bg-[#151515]">
        <Icon w={22} h={24} box="0 0 22 24">
          <rect x="1" y="1" width="20" height="22" />
          {selected ? <circle cx="11" cy="12" r="5" fill="currentColor" stroke="none" /> : <path d="M2 2h5v5H2ZM12 2h5v5h-5ZM7 7h5v5H7ZM17 7h3v5h-3ZM2 12h5v5H2ZM12 12h5v5h-5ZM7 17h5v5H7ZM17 17h3v5h-3Z" fill="#777" stroke="none" />}
          {!selected && <circle cx="11" cy="12" r="5" fill="#222" stroke="#555" />}
        </Icon>
      </span>
      <span className={clsx('ml-1.5 flex h-8 w-[467px] items-center font-bold', selected ? 'border-2 border-[#a0a0a0] pl-[3px]' : 'pl-[5px]')}>{name}</span>
      <div className="ml-2.5 flex gap-1">
        <Cell on><Shy /></Cell>
        <Cell on><Sun className="text-[#777]" /></Cell>
        <Cell on><Icon><path d="M21 2L4 22" strokeWidth="3" /></Icon></Cell>
        <Cell />
        <Cell />
        <Cell on />
        <Cell on={!selected} />
        <Cell on />
      </div>
      <div className="ml-[150px] flex gap-1">
        <Cell on>{!selected && <Eye />}</Cell>
        <Cell />
        <Cell on={!selected} />
        <Cell on />
      </div>
      <Dropdown label={`${name} mode`} value="Normal" className="ml-[17px] h-8 w-[139px]" />
      <span className="mx-2.5 w-[26px]">{!selected && <Cell on />}</span>
      <span className="mr-5 w-[132px]">{!selected && <Dropdown label="Track matte" value="Luma" className="h-8 w-[132px]" />}</span>
      <Pickwhip />
      <Dropdown label={`${name} parent`} value="None" className="ml-2.5 h-8 w-[298px]" />
    </div>
  );
}

function ColumnHeader() {
  const bar = 'h-6 w-0.5 shrink-0 bg-black';
  return (
    <div className="flex h-10 items-center border-y-2 border-black bg-[#303030] pl-[30px] text-[18px]">
      <Icon w={28} h={26} box="0 0 28 26"><path d="M2 1h11l14 14-9 10L2 11Z" fill="currentColor" stroke="none" /><circle cx="7" cy="6" r="2" fill="#303030" stroke="none" /></Icon>
      <span className={clsx(bar, 'ml-2.5')} />
      <span className="ml-2.5 w-[53px]">#</span>
      <span className={bar} />
      <span className="ml-2.5 w-[526px]">Layer Name</span>
      <span className={bar} />
      <div className="ml-2 flex w-[376px] items-center gap-1">
        <Cell><Shy /></Cell>
        <Cell><Sun /></Cell>
        <Cell><Icon><path d="M3 4l18 17" strokeWidth="4" strokeDasharray="5 2" /></Icon></Cell>
        <Cell><span className="font-['Liberation_Serif',serif] text-[27px] leading-none italic">fx</span></Cell>
        <Cell><Film /></Cell>
        <Cell><MotionBlur /></Cell>
        <Cell><Icon><circle cx="12" cy="12" r="10" /><path d="M19 5A10 10 0 0 1 5 19Z" fill="currentColor" /></Icon></Cell>
        <Cell><Cube /></Cell>
      </div>
      <span className={bar} />
      <div className="ml-2 flex w-[124px] items-center gap-1">
        <Cell><Eye /></Cell>
        <Cell><Volume2 size={26} fill="currentColor" /></Cell>
        <Cell><span className="h-3.5 w-3.5 rounded-full bg-[#adadad]" /></Cell>
        <Cell><Lock size={22} fill="#777" /></Cell>
      </div>
      <span className={bar} />
      <span className="ml-2.5 w-[148px]">Mode</span>
      <span className="w-9">T</span>
      <span className="w-[134px]">TrkMat</span>
      <span className={bar} />
      <span className="ml-2.5 w-[338px]">Parent &amp; Link</span>
      <span className={bar} />
    </div>
  );
}

function TimelineLeft() {
  return (
    <div className="flex w-[1910px] shrink-0 flex-col border-r-2 border-black bg-[#262626]">
      <div className="flex h-[62px] shrink-0">
        <div className="w-[204px] pl-7">
          <p className="text-[27px] leading-8 font-bold text-[#409fea]">0;00;00;00</p>
          <p className="-ml-1 text-[19px] leading-6 text-[#1c6ba8]">00000 (29.97 fps)</p>
        </div>
        <div className="mt-1.5 flex h-[38px] w-[1300px] items-center rounded border-2 border-[#303030] bg-[#101010] pl-2.5">
          <SearchDrop />
        </div>
        <div className="flex items-start gap-8 pt-2.5 pl-8">
          <Icon w={36} h={34} box="0 0 36 34"><path d="M1 4h10v5H1ZM22 4h9v6h-9ZM22 16h9v6h-9Z" fill="currentColor" stroke="none" /><path d="M10 7h12M17 7v12h5" /><path d="M26 26h9l-5 6Z" fill="currentColor" stroke="none" /></Icon>
          <Icon w={36} h={34} box="0 0 36 34"><path d="M9 0v18M0 9h18M3 3l12 12M15 3L3 15" /><path d="M24 12l10 6v10l-10 5-10-5V18ZM14 18l10 5 10-5M24 23v10" /></Icon>
          <Icon w={32} h={32} box="0 0 32 32"><path d="M0 16h32v14H0Z" fill="#6c6c6c" stroke="none" /><path d="M3 14C5 4 10 1 16 1s11 3 13 13H19v10h-6V14Z" fill="currentColor" stroke="none" /><circle cx="12" cy="9" r="2" fill="#222" stroke="none" /><circle cx="20" cy="9" r="2" fill="#222" stroke="none" /></Icon>
          <span className="-ml-2.5"><Film size={30} /></span>
          <Icon w={30} h={30} box="0 0 26 24" className="-ml-2"><circle cx="9" cy="15" r="7" /><circle cx="12" cy="12" r="8" fill="#2c2c2c" /><circle cx="16" cy="9" r="8" fill="#6c6c6c" /></Icon>
          <Icon w={34} h={32} box="0 0 34 32" className="ml-1"><path d="M3 6h28v24H3ZM8 0v6M16 0v6M24 0v6M0 12h3M0 20h3M0 28h3" /><path d="M8 12c8 0 8 14 18 14" /></Icon>
        </div>
      </div>
      <ColumnHeader />
      <LayerRow index={1} name="Gradient Ellipse" selected />
      {rows1.map((row) => <PropertyRow key={row.label} row={row} />)}
      <LayerRow index={2} name="Shape Layer 1" />
      {rows2.map((row) => <PropertyRow key={row.label} row={row} />)}
    </div>
  );
}

function TrackRow({ row }: { row: PropRow }) {
  return (
    <div className={clsx('flex border-b-2 border-[#1f1f1f] pr-[15px]', row.tall ? 'h-[92px]' : 'h-[34px]')}>
      <span className="flex w-[21px] shrink-0 items-center bg-linear-to-r from-[#262626] from-[14px] to-[#333] to-[14px] pt-0.5 pl-[7px]">
        {!row.expression && <IBeam />}
      </span>
      <div className="flex-1 overflow-hidden bg-[#333] pl-1.5">
        {row.expression && <code className="block pt-1 font-['DejaVu_Sans_Mono',monospace] text-[32px] leading-9 whitespace-pre text-[#a0a0a0]">{row.expression}</code>}
      </div>
    </div>
  );
}

function Tracks() {
  return (
    <div className="relative flex min-w-0 flex-1 flex-col overflow-hidden border-r-2 border-black bg-[#262626]">
      <div className="flex h-[22px] shrink-0 gap-0.5 border-y-2 border-black bg-black pr-px">
        <span className="w-3 rounded-l-full bg-[#2d8ceb]" />
        <span className="flex-1 bg-[#686868]" />
        <span className="w-3 rounded-r-full bg-[#2d8ceb]" />
      </div>
      <div className="flex h-[39px] shrink-0 justify-between pr-[15px] pl-3.5 text-[19px]">
        {['0:00s', '01s', '02s', '03s', '04s', '05s', '06s', '07s'].map((t) => (
          <span key={t} className="flex w-0 flex-col items-center">
            <span className="leading-7">{t}</span>
            <span className="h-2.5 w-0.5 bg-[#909090]" />
          </span>
        ))}
      </div>
      <div className="flex h-[33px] shrink-0 gap-0.5 border-y-2 border-black bg-black pl-0.5">
        <span className="w-2.5 rounded-l-lg bg-[#2d8ceb]" />
        <span className="flex-1 border-t-2 border-[#707070] bg-[#606060]" />
        <span className="mr-0.5 w-2.5 rounded-r-lg bg-[#2d8ceb]" />
      </div>
      <div className="flex h-2 shrink-0 border-b-2 border-black pl-4">
        <span className="w-1 bg-[#12b822]" />
      </div>
      <div className="h-[34px] shrink-0 border-b-2 border-[#1f1f1f] bg-[#484848] pr-[15px] pl-3.5">
        <div className="h-8 border-t-2 border-[#a9b1ea] bg-linear-to-b from-[#7080d4] to-[#435bc8]" />
      </div>
      {rows1.map((row) => <TrackRow key={row.label} row={row} />)}
      <div className="h-[34px] shrink-0 border-b-2 border-[#1f1f1f] bg-[#303030] pr-[15px] pl-3.5">
        <div className="h-8 border-t-2 border-b-2 border-t-[#60658c] border-b-[#424a80] bg-[#535b92]" />
      </div>
      {rows2.map((row) => <TrackRow key={row.label} row={row} />)}
      <div className="mr-[15px] ml-3.5 flex-1 bg-[#333]" />
      {/* current time indicator */}
      <svg width="26" height="28" viewBox="0 0 26 28" className="absolute top-8 left-0.5" aria-hidden="true">
        <path d="M1 0h24v10L15 26h-4L1 10Z" fill="#2d8ceb" />
        <path d="M13 14v14" stroke="#999" strokeWidth="2" />
      </svg>
      <div className="absolute top-[60px] bottom-0 left-3.5 w-0.5 bg-[#2d8ceb]" />
    </div>
  );
}

function Timeline() {
  return (
    <section className="flex flex-1 flex-col border-t-8 border-[#171717] bg-[#262626]">
      <div className="mb-1.5 flex h-[58px] items-center pl-6">
        <span className="w-[30px]">×</span>
        <span className="mr-5 h-5 w-5 bg-[#a3906a]" />
        Comp 1
      </div>
      <div className="flex flex-1">
        <TimelineLeft />
        <Tracks />
        <div className="flex w-[35px] flex-col items-center pt-[66px]">
          <Icon w={24} h={28} box="0 0 26 30"><path d="M1 1h24v18L13 29 1 19Z" fill="currentColor" stroke="none" /></Icon>
          <Icon w={32} h={28} box="0 0 32 28" className="mt-2.5"><path d="M17 2L3 18h12V2M10 15h13" /><path d="M16 6h14v14H16Z" fill="currentColor" stroke="none" /><circle cx="15" cy="20" r="6" fill="#262626" /></Icon>
        </div>
      </div>
      <footer className="flex h-[38px] shrink-0 items-center border-t-2 border-black pl-1.5">
        <div className="flex w-[1904px] items-center gap-2 pl-1 text-[#2d8ceb]">
          <Icon w={30} h={26} box="0 0 30 26"><path d="M4 16H2V2h12v3M9 20H7V7h12v3M12 12h13v12H12Z" /><path d="M17 16h4v4h-4Z" fill="currentColor" stroke="none" /></Icon>
          <Icon w={30} h={26} box="0 0 30 26"><circle cx="11" cy="10" r="8" /><path d="M12 12h13v12H12Z" /><path d="M12 12h7c0 3-3 6-7 6Z" fill="currentColor" stroke="none" /></Icon>
          <Icon w={26} h={26} box="0 0 26 26" className="text-[#a0a0a0]"><path d="M7 0h3v26H7v-7l-5-6 5-6ZM16 0h3v7l5 6-5 6v7h-3Z" fill="currentColor" stroke="none" /><path d="M10 0h6v26h-6Z" fill="#666" stroke="none" /></Icon>
        </div>
        <Icon w={22} h={14} box="0 0 22 14" className="ml-2.5"><path d="M0 13l5-7 4 3 4-8 8 12Z" fill="currentColor" stroke="none" /></Icon>
        <div className="ml-5 flex items-center">
          <span className="h-5 w-5 rounded-full border-4 border-[#919191]" />
          <span className="h-1.5 w-[76px] bg-[#424242]" />
        </div>
        <Icon w={34} h={20} box="0 0 34 20" className="ml-5"><path d="M0 20l10-16 4 5L7 20ZM9 20L22 0l12 20Z" fill="currentColor" stroke="none" /></Icon>
        <span className="mr-[37px] ml-2.5 h-full flex-1 bg-[#1d1d1d]" />
      </footer>
    </section>
  );
}

/* ---------- gradient editor ---------- */

const channels = [
  { name: 'H', value: '0', unit: '°' },
  { name: 'S', value: '0', unit: '%' },
  { name: 'B', value: '27', unit: '%' },
  { name: 'R', value: '0.2721' },
  { name: 'G', value: '0.2721' },
  { name: 'B', value: '0.2721' },
];

const OpacityStop = () => (
  <Icon w={24} h={32} box="0 0 24 32">
    <path d="M0 0h24v19L12 32 0 19Z" fill="#8c8c8c" stroke="none" />
    <rect x="2" y="2" width="20" height="14" fill="#000" stroke="none" />
  </Icon>
);

function GradientEditor() {
  const pill = 'h-10 rounded-full border-[3px]';
  return (
    <div role="dialog" aria-label="Gradient Editor" className="absolute top-[204px] left-[109px] h-[930px] w-[1097px] rounded-xl border-x border-b-2 border-[#444] bg-[#262626] shadow-[0_24px_70px_8px_rgba(0,0,0,0.6)]">
      <h1 className="flex h-[44px] items-center justify-center rounded-t-xl bg-linear-to-b from-[#e6e6e6] to-[#cfcfcf] font-[Inter,sans-serif] text-[26px] text-[#444]">Gradient Editor</h1>
      <div className="flex gap-[41px] pt-[23px] pl-6">
        <div className="w-[826px]">
          <div className="flex h-[41px] items-center gap-0.5">
            <button aria-label="Linear gradient" className="flex h-full w-[45px] items-center justify-center rounded bg-[#151515]">
              <span className="h-[22px] w-[29px] border-2 border-[#2d8ceb] bg-linear-to-r from-[#222] to-[#999]" />
            </button>
            <button aria-label="Radial gradient" className="flex h-full w-[45px] items-center justify-center rounded border-2 border-[#303030] bg-[#1e1e1e]">
              <span className="h-[22px] w-[29px] border-2 border-[#adadad] bg-radial from-[#bbb] to-[#333]" />
            </button>
            <span className="ml-[22px]">Linear Gradient</span>
          </div>
          <div className="mt-6 flex justify-between px-px"><OpacityStop /><OpacityStop /></div>
          <div className="mx-3 h-[56px] border border-y-2 border-black bg-[linear-gradient(90deg,#fff_0%,#fcfcfc_7%,#ebebeb_16%,#a0a0a0_35%,#464646_51%,#a0a0a0_68%,#e6e6e6_86%,#fff_98%)]" />
          <svg viewBox="0 0 826 32" className="block w-full" aria-hidden="true">
            <path d="M1 32V13L13 0l12 13v19ZM801 32V13L813 0l12 13v19Z" fill="#8c8c8c" />
            <path d="M3 16h20v14H3ZM803 16h20v14H803Z" fill="#fff" />
            <path d="M407 31V13L418 1l11 12v18Z" fill="#bbb" stroke="#2d8ceb" strokeWidth="2" />
            <path d="M411 16h14v12H411Z" fill="#444" stroke="#222" />
            <path d="M289 2l8 8-8 8-8-8ZM570 2l8 8-8 8-8-8Z" fill="none" stroke="#a0a0a0" strokeWidth="2" />
          </svg>
          <div className="mt-5 flex h-10 items-center">
            <span className="w-[95px] text-[#505050]">Opacity:</span>
            <span className="w-[124px] text-[#505050]">- %</span>
            <span className="w-[104px]">Location:</span>
            <span className="w-[122px]"><span className={blue}>50.7</span> %</span>
            <button className={clsx(pill, 'w-[180px] border-[#8c8c8c]')}>Delete</button>
          </div>
          <hr className="mt-5 border-t-2 border-[#2e2e2e]" />
          <div className="mt-[34px] flex">
            <div className="ml-3 h-[512px] w-[512px] bg-[linear-gradient(to_top,#000,transparent),linear-gradient(to_right,#fff,#f00)]">
              <svg width="20" height="26" viewBox="0 0 20 26" className="relative top-[360px] -left-1" aria-hidden="true">
                <path d="M1 3c16-8 16 28 0 20" fill="none" stroke="#fff" strokeWidth="2" />
              </svg>
            </div>
            <Icon w={10} h={20} box="0 0 10 20" className="-mb-2 ml-3 self-end text-[#ddd]"><path d="M2 1l6 9-6 9" /></Icon>
            <div className="ml-[5px] h-[512px] w-[37px] bg-[linear-gradient(to_bottom,#f00,#f0f_17%,#00f_33%,#0ff_50%,#0f0_67%,#ff0_83%,#f00)]" />
            <Icon w={10} h={20} box="0 0 10 20" className="-mb-2 ml-[5px] self-end text-[#ddd]"><path d="M8 1l-6 9 6 9" /></Icon>
            <div className="ml-[15px]">
              <div className="h-[136px] w-[122px] border-2 border-[#303030] bg-[#454545]" />
              <div className="mt-4 grid auto-rows-[46px]">
                {channels.map((c, i) => (
                  <label key={i} className={clsx('flex items-center', i > 2 && 'translate-y-3')}>
                    <input type="radio" name="channel" defaultChecked={i === 0} className="ml-1 h-[26px] w-[26px] appearance-none rounded-full border-4 border-[#8c8c8c] checked:bg-[#8c8c8c]" />
                    <span className="ml-1.5 w-[26px]">{c.name}:</span>
                    <span className={blue}>{c.value}</span>
                    <span className="ml-1.5">{c.unit}</span>
                  </label>
                ))}
              </div>
              <label className="mt-[26px] -ml-2 flex items-center gap-2">
                #
                <input defaultValue="454545" className="h-[38px] w-[117px] rounded border-2 border-[#303030] bg-[#151515] pl-2 text-[#c8c8c8]" />
              </label>
            </div>
          </div>
        </div>
        <div className="flex w-[160px] flex-col items-start">
          <button className={clsx(pill, 'w-full border-[#e6e6e6] font-semibold text-white')}>OK</button>
          <button className={clsx(pill, 'mt-5 w-full border-[#8c8c8c]')}>Cancel</button>
          <button aria-label="Eyedropper" className="mt-[163px] flex h-[42px] w-[42px] items-center justify-center rounded border-2 border-[#303030] bg-[#1c1c1c]"><Eyedropper /></button>
          <CheckBox label="Preview" checked className="mt-5" />
        </div>
      </div>
    </div>
  );
}

export default function App() {
  return (
    <div className="relative flex min-h-screen flex-col bg-[#171717] font-['Open_Sans',sans-serif] text-[21px] leading-7 text-[#a0a0a0]">
      <MenuBar />
      <div className="flex h-8 items-center gap-4 rounded-t-lg bg-[#f5f5f5] px-3">
        <span className="flex h-[22px] w-[22px] items-center justify-center rounded-full border border-[#ccc] bg-[#dedede]"><span className="h-1.5 w-1.5 rounded-full bg-[#666]" /></span>
        <span className="h-[22px] w-[22px] rounded-full border border-[#ccc] bg-[#dedede]" />
        <span className="h-[22px] w-[22px] rounded-full border border-[#ccc] bg-[#dedede]" />
        <p className="mr-[114px] flex-1 text-center font-[Inter,sans-serif] text-[22px] text-[#b0b0b0]">Adobe After Effects 2020 - Untitled Project *</p>
      </div>
      <ToolBar />
      <main className="mt-1 flex h-[916px] gap-2">
        <ProjectPanel />
        <CompositionPanel />
        <RightPanel />
      </main>
      <Timeline />
      <GradientEditor />
    </div>
  );
}
